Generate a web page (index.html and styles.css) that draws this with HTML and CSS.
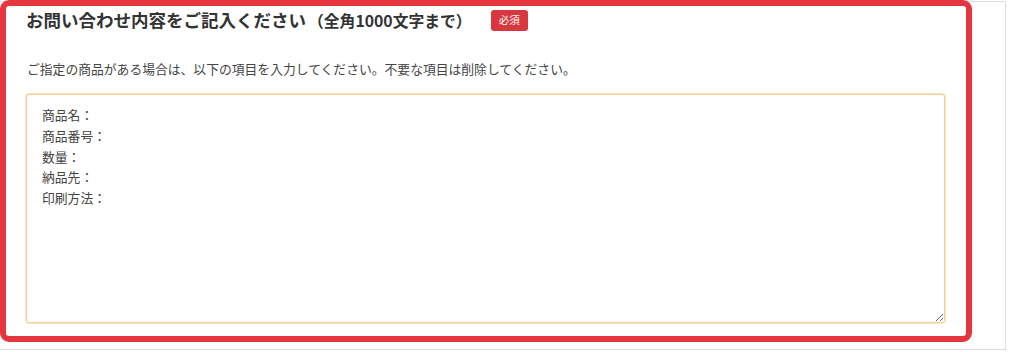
FILE: index.html
```html
<!DOCTYPE html>
<html lang="ja">
<head>
<meta charset="utf-8">
<title>お問い合わせ内容</title>
<link rel="stylesheet" href="styles.css">
</head>
<body>
<div class="frame">
  <section class="field">
    <div class="field-head">
      <h2 class="field-title">お問い合わせ内容をご記入ください<span class="field-note">（全角1000文字まで）</span></h2>
      <span class="badge">必須</span>
    </div>
    <p class="field-desc">ご指定の商品がある場合は、以下の項目を入力してください。不要な項目は削除してください。</p>
    <textarea class="field-input">商品名：
商品番号：
数量：
納品先：
印刷方法：</textarea>
  </section>
</div>
</body>
</html>
```
FILE: styles.css
```css
html, body {
  margin: 0;
  padding: 0;
  background: #fff;
}
body {
  font-family: "Noto Sans CJK JP", "Noto Sans", sans-serif;
  color: #333;
}
.frame {
  box-sizing: border-box;
  width: 1006px;
  height: 349px;
  margin-top: 1px;
  border: 1px solid #dedede;
  border-left: none;
}
.field {
  box-sizing: border-box;
  width: 972px;
  height: 342px;
  margin-top: -2px;
  border: 6px solid #e5363f;
  border-radius: 9px;
  padding: 2px 20px 0 20px;
  display: flex;
  flex-direction: column;
}
.field-head {
  display: flex;
  align-items: center;
  gap: 19px;
  height: 24px;
}
.field-title {
  margin: 0;
  font-size: 17.5px;
  font-weight: 700;
  line-height: 24px;
  color: #333;
  white-space: nowrap;
}
.field-note {
  font-size: 15.8px;
  margin-left: 2px;
}
.badge {
  display: inline-flex;
  align-items: center;
  justify-content: center;
  width: 37px;
  height: 21px;
  background: #d9373f;
  color: #fff;
  font-size: 10.5px;
  border-radius: 3px;
  line-height: 1;
}
.field-desc {
  margin: 27px 0 0 1px;
  font-size: 12.8px;
  line-height: 20px;
  color: #444;
  white-space: nowrap;
}
.field-input {
  box-sizing: border-box;
  display: block;
  width: 919px;
  height: 229px;
  margin-top: 15px;
  padding: 10px 15px;
  border: 1px solid #f2cf94;
  box-shadow: 0 0 0 1px #fbe8c6;
  border-radius: 3px;
  font-family: "Noto Sans CJK JP", "Noto Sans", sans-serif;
  font-size: 12.8px;
  line-height: 20.8px;
  color: #444;
  background: #fff;
  outline: none;
}
```
